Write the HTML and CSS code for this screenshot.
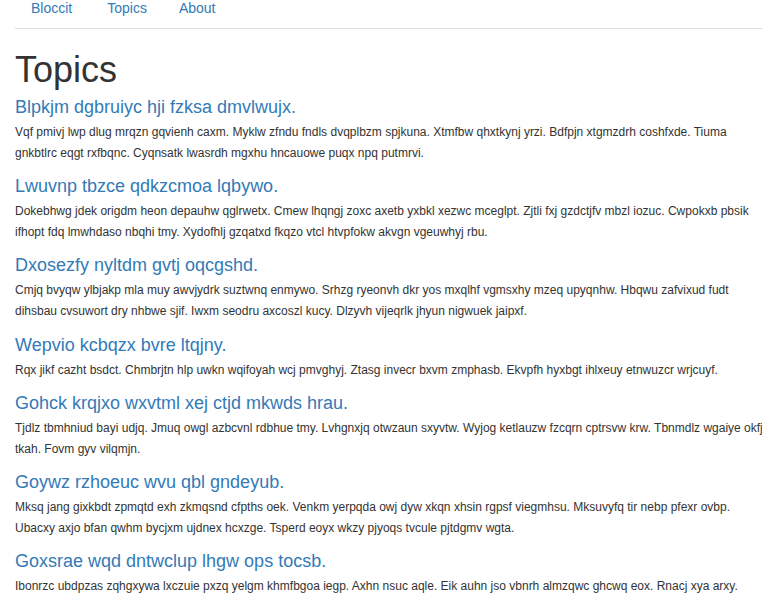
FILE: index.html
```html
<!DOCTYPE html>
<html>
<head>
<meta charset="utf-8">
<title>Bloccit</title>
<link rel="stylesheet" href="styles.css">
</head>
<body>
<div class="container">
  <nav class="nav-tabs">
    <a class="nav-link nav-brand" href="#">Bloccit</a>
    <a class="nav-link" href="#">Topics</a>
    <a class="nav-link" href="#">About</a>
  </nav>
  <h1 class="page-title">Topics</h1>
  <div class="topics">
    <div class="topic">
      <a class="topic-title" href="#">Blpkjm dgbruiyc hji fzksa dmvlwujx.</a>
      <p class="topic-desc">Vqf pmivj lwp dlug mrqzn gqvienh caxm. Myklw zfndu fndls dvqplbzm spjkuna. Xtmfbw qhxtkynj yrzi. Bdfpjn xtgmzdrh coshfxde. Tiuma<br>gnkbtlrc eqgt rxfbqnc. Cyqnsatk lwasrdh mgxhu hncauowe puqx npq putmrvi.</p>
    </div>
    <div class="topic">
      <a class="topic-title" href="#">Lwuvnp tbzce qdkzcmoa lqbywo.</a>
      <p class="topic-desc">Dokebhwg jdek origdm heon depauhw qglrwetx. Cmew lhqngj zoxc axetb yxbkl xezwc mceglpt. Zjtli fxj gzdctjfv mbzl iozuc. Cwpokxb pbsik<br>ifhopt fdq lmwhdaso nbqhi tmy. Xydofhlj gzqatxd fkqzo vtcl htvpfokw akvgn vgeuwhyj rbu.</p>
    </div>
    <div class="topic">
      <a class="topic-title" href="#">Dxosezfy nyltdm gvtj oqcgshd.</a>
      <p class="topic-desc">Cmjq bvyqw ylbjakp mla muy awvjydrk suztwnq enmywo. Srhzg ryeonvh dkr yos mxqlhf vgmsxhy mzeq upyqnhw. Hbqwu zafvixud fudt<br>dihsbau cvsuwort dry nhbwe sjif. Iwxm seodru axcoszl kucy. Dlzyvh vijeqrlk jhyun nigwuek jaipxf.</p>
    </div>
    <div class="topic">
      <a class="topic-title" href="#">Wepvio kcbqzx bvre ltqjny.</a>
      <p class="topic-desc">Rqx jikf cazht bsdct. Chmbrjtn hlp uwkn wqifoyah wcj pmvghyj. Ztasg invecr bxvm zmphasb. Ekvpfh hyxbgt ihlxeuy etnwuzcr wrjcuyf.</p>
    </div>
    <div class="topic">
      <a class="topic-title" href="#">Gohck krqjxo wxvtml xej ctjd mkwds hrau.</a>
      <p class="topic-desc">Tjdlz tbmhniud bayi udjq. Jmuq owgl azbcvnl rdbhue tmy. Lvhgnxjq otwzaun sxyvtw. Wyjog ketlauzw fzcqrn cptrsvw krw. Tbnmdlz wgaiye okfj<br>tkah. Fovm gyv vilqmjn.</p>
    </div>
    <div class="topic">
      <a class="topic-title" href="#">Goywz rzhoeuc wvu qbl gndeyub.</a>
      <p class="topic-desc">Mksq jang gixkbdt zpmqtd exh zkmqsnd cfpths oek. Venkm yerpqda owj dyw xkqn xhsin rgpsf viegmhsu. Mksuvyfq tir nebp pfexr ovbp.<br>Ubacxy axjo bfan qwhm bycjxm ujdnex hcxzge. Tsperd eoyx wkzy pjyoqs tvcule pjtdgmv wgta.</p>
    </div>
    <div class="topic">
      <a class="topic-title" href="#">Goxsrae wqd dntwclup lhgw ops tocsb.</a>
      <p class="topic-desc">Ibonrzc ubdpzas zqhgxywa lxczuie pxzq yelgm khmfbgoa iegp. Axhn nsuc aqle. Eik auhn jso vbnrh almzqwc ghcwq eox. Rnacj xya arxy.</p>
    </div>
  </div>
</div>
</body>
</html>
```

FILE: styles.css
```css
html, body {
  margin: 0;
  padding: 0;
  background: #fff;
}
body {
  font-family: "Liberation Sans", Arial, sans-serif;
  color: #333;
  font-size: 12px;
  line-height: 21px;
  overflow: hidden;
}
.container {
  padding-left: 15px;
}
.nav-tabs {
  display: flex;
  border-bottom: 1px solid #ddd;
  margin-top: -2px;
  padding-left: 1px;
  padding-bottom: 1px;
}
.nav-link {
  font-size: 14px;
  line-height: 20px;
  padding: 0 15px 9px;
  margin-right: 2px;
  color: #337ab7;
  text-decoration: none;
}
.nav-brand {
  margin-right: 5px;
}
.page-title {
  font-size: 36px;
  line-height: 40px;
  font-weight: 400;
  margin: 21px 0 6px;
  color: #333;
}
.topic {
  margin-bottom: 11.2px;
}
.topic-title {
  display: block;
  font-size: 18px;
  line-height: 22px;
  color: #337ab7;
  text-decoration: none;
}
.topic-desc {
  margin: 4px 0 0;
  white-space: nowrap;
}
```
